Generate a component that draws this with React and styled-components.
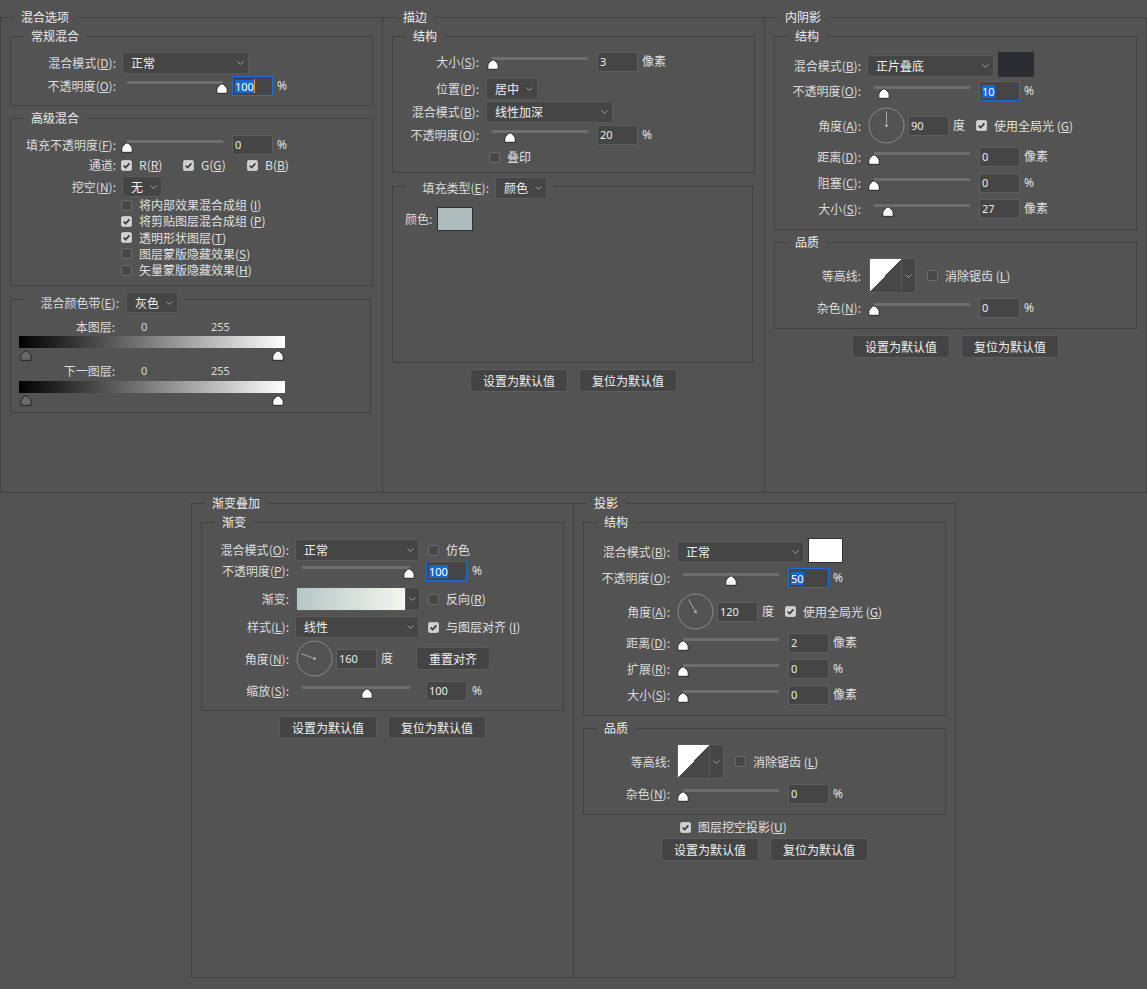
import React from 'react';
import styled, { createGlobalStyle } from 'styled-components';

const LINE = '#404040';
const FIELD = '#454545';
const EDGE = '#5e5e5e';

const GlobalStyle = createGlobalStyle`
  html, body {
    margin: 0;
    padding: 0;
    background: #535353;
  }
  body {
    font-family: "Noto Sans CJK SC", "Noto Sans", sans-serif;
    font-size: 12px;
    line-height: 16px;
    color: #e0e0e0;
  }
`;

const Page = styled.div`
  box-sizing: border-box;
  width: 1147px;
  height: 989px;
  padding-top: 9px;
  overflow: hidden;
`;

const TopRow = styled.div`
  display: flex;
`;

const BottomRow = styled.div`
  display: flex;
  margin-top: 2px;
  padding-left: 191px;
`;

const Panel = styled.fieldset`
  box-sizing: border-box;
  flex: none;
  width: 383px;
  height: ${({ $h }) => $h}px;
  min-width: 0;
  margin: 0;
  padding: 0;
  border: 1px solid ${LINE};
  & + & {
    margin-left: -1px;
  }
`;

const Title = styled.legend`
  height: 16px;
  margin-left: 13px;
  padding: 0 8px 0 7px;
  line-height: 16px;
  color: #ececec;
`;

const SelectLegend = styled.legend`
  height: 16px;
  margin-left: 13px;
  padding: 0;
`;

const LegendBar = styled.div`
  display: flex;
  align-items: center;
  height: ${({ $h }) => $h}px;
  margin-top: ${({ $mt }) => $mt}px;
  padding-right: 6px;
`;

const Group = styled.fieldset`
  box-sizing: border-box;
  width: ${({ $w }) => $w || 363}px;
  ${({ $h }) => ($h ? `height: ${$h}px;` : '')}
  min-width: 0;
  margin: ${({ $mt }) => $mt || 0}px 0 0 9px;
  padding: 0 0 ${({ $pb }) => $pb || 0}px;
  border: 1px solid ${LINE};
`;

const Row = styled.div`
  display: flex;
  align-items: center;
  height: ${({ $h }) => $h || 20}px;
  margin-top: ${({ $mt }) => $mt || 0}px;
  padding-left: ${({ $pl }) => $pl || 0}px;
`;

const Label = styled.span`
  flex: none;
  width: ${({ $w }) => $w}px;
  text-align: right;
  white-space: nowrap;
  color: #dcdcdc;
`;

const Key = styled.span`
  text-decoration: underline;
  text-underline-offset: 1px;
`;

const SelectBox = styled.div`
  flex: none;
  box-sizing: border-box;
  display: flex;
  align-items: center;
  justify-content: space-between;
  width: ${({ $w }) => $w}px;
  height: ${({ $h }) => $h || 22}px;
  margin-left: ${({ $ml }) => $ml || 0}px;
  padding: 0 4px 0 8px;
  background: ${FIELD};
  border: 1px solid #5a5a5a;
  border-radius: 3px;
  color: #f0f0f0;
  white-space: nowrap;
`;

const SliderBox = styled.div`
  flex: none;
  position: relative;
  align-self: stretch;
  width: ${({ $track }) => $track + 12}px;
  margin-left: ${({ $ml }) => $ml}px;
`;

const Track = styled.div`
  height: 3px;
  margin: 5px 6px 0;
  background: #6f6f6f;
`;

const ThumbSlot = styled.div`
  position: absolute;
  top: 7px;
  width: 12px;
  height: 11px;
  line-height: 0;
`;

const NumField = styled.div`
  flex: none;
  box-sizing: border-box;
  display: flex;
  align-items: center;
  width: ${({ $w }) => $w || 41}px;
  height: 20px;
  margin-left: ${({ $ml }) => $ml || 0}px;
  padding-left: 2px;
  background: ${FIELD};
  border: 1px solid ${({ $active }) => ($active ? '#1a6fd6' : EDGE)};
  font-family: "Noto Sans", sans-serif;
  font-size: 11px;
  color: #ececec;
`;

const Selected = styled.span`
  line-height: 13px;
  background: #1467d4;
  color: #ffffff;
`;

const Caret = styled.span`
  width: 1px;
  height: 14px;
  background: #f0962e;
`;

const Unit = styled.span`
  flex: none;
  margin-left: ${({ $ml }) => $ml || 0}px;
  font-family: "Noto Sans", "Noto Sans CJK SC", sans-serif;
  color: #e0e0e0;
`;

const CheckItem = styled.span`
  flex: none;
  display: flex;
  align-items: center;
  gap: 7px;
  width: ${({ $w }) => ($w ? `${$w}px` : 'auto')};
  margin-left: ${({ $ml }) => $ml || 0}px;
  white-space: nowrap;
  color: #e0e0e0;
`;

const Box = styled.span`
  flex: none;
  box-sizing: border-box;
  display: flex;
  align-items: center;
  justify-content: center;
  width: 11px;
  height: 11px;
  border-radius: 2px;
  border: 1px solid ${({ $on }) => ($on ? '#c4c4c4' : '#6c6c6c')};
  background: ${({ $on }) => ($on ? '#d0d0d0' : '#474747')};
`;

const CheckRow = styled.div`
  display: flex;
  align-items: center;
  height: 16.25px;
  padding-left: ${({ $pl }) => $pl}px;
`;

const Swatch = styled.div`
  flex: none;
  box-sizing: border-box;
  width: ${({ $w }) => $w}px;
  height: ${({ $h }) => $h}px;
  margin-left: ${({ $ml }) => $ml || 0}px;
  align-self: ${({ $end }) => ($end ? 'flex-end' : 'center')};
  background: ${({ $c }) => $c};
  border: 1px solid #303030;
`;

const DialBox = styled.div`
  flex: none;
  width: 37px;
  height: 37px;
  margin-left: ${({ $ml }) => $ml}px;
  line-height: 0;
`;

const Btn = styled.div`
  flex: none;
  box-sizing: border-box;
  display: flex;
  align-items: center;
  justify-content: center;
  width: ${({ $w }) => $w || 98}px;
  height: 23px;
  margin-left: ${({ $ml }) => $ml || 0}px;
  background: #444444;
  border: 1px solid #5c5c5c;
  border-radius: 3px;
  color: #f0f0f0;
  white-space: nowrap;
`;

const ButtonRow = styled.div`
  display: flex;
  justify-content: center;
  gap: 11px;
  margin-top: ${({ $mt }) => $mt}px;
`;

const GradientPick = styled.div`
  flex: none;
  box-sizing: border-box;
  display: flex;
  width: 124px;
  height: 24px;
  margin-left: ${({ $ml }) => $ml}px;
  background: ${FIELD};
  border: 1px solid #5a5a5a;
  border-radius: 2px;
`;

const GradientFill = styled.div`
  flex: 1;
  background: linear-gradient(to right, #b5c6c6, #f5f6ee);
`;

const DropStrip = styled.div`
  flex: none;
  display: flex;
  align-items: center;
  justify-content: center;
  width: 13px;
  border-left: 1px solid #5a5a5a;
`;

const ContourBox = styled.div`
  flex: none;
  box-sizing: border-box;
  display: flex;
  width: 47px;
  height: 35px;
  margin-left: ${({ $ml }) => $ml}px;
  background: ${FIELD};
  border: 1px solid #5c5c5c;
`;

const ContourCurve = styled.div`
  width: 34px;
  background: linear-gradient(to bottom right, #ffffff 50%, #474747 50%);
`;

const Band = styled.div`
  width: 266px;
  height: 12px;
  margin: ${({ $mt }) => $mt}px 0 0 8px;
  background: linear-gradient(to right, #000000, #ffffff);
`;

const BandThumbs = styled.div`
  box-sizing: border-box;
  display: flex;
  justify-content: space-between;
  width: 266px;
  height: 10px;
  margin: 2px 0 0 8px;
  padding: 0 1px;
  line-height: 0;
`;

const Num = styled.span`
  flex: none;
  width: ${({ $w }) => ($w ? `${$w}px` : 'auto')};
  margin-left: ${({ $ml }) => $ml || 0}px;
  font-family: "Noto Sans", sans-serif;
  font-size: 11px;
  color: #dcdcdc;
`;

const keyText = (t, k, sp) => (
  <>
    {t}
    {sp ? ' ' : ''}
    {k && <>(<Key>{k}</Key>)</>}
  </>
);

const Chevron = () => (
  <svg width="7" height="4" viewBox="0 0 7 4">
    <path d="M0.5 0.5 L3.5 3.5 L6.5 0.5" fill="none" stroke="#a3a3a3" />
  </svg>
);

const Select = ({ w, h, ml, children }) => (
  <SelectBox $w={w} $h={h} $ml={ml}>
    <span>{children}</span>
    <Chevron />
  </SelectBox>
);

const Thumb = ({ dark }) => (
  <svg width="12" height="11" viewBox="0 0 12 11">
    <path
      d="M6 0.8 C7.3 0.8 11.2 4.4 11.2 6.4 V10.3 H0.8 V6.4 C0.8 4.4 4.7 0.8 6 0.8 Z"
      fill={dark ? '#6a6a6a' : '#ffffff'}
      stroke="#242424"
    />
  </svg>
);

const Slider = ({ track, ml, pct }) => (
  <SliderBox $track={track} $ml={ml}>
    <Track />
    <ThumbSlot style={{ left: Math.round(6 + (pct / 100) * (track - 1) - 6) }}>
      <Thumb />
    </ThumbSlot>
  </SliderBox>
);

const Check = ({ on, t, k, sp, ml, w }) => (
  <CheckItem $ml={ml} $w={w}>
    <Box $on={on}>
      {on && (
        <svg width="9" height="9" viewBox="0 0 9 9">
          <path d="M1.6 4.6 L3.7 6.6 L7.4 2.4" fill="none" stroke="#383838" strokeWidth="1.6" />
        </svg>
      )}
    </Box>
    <span>{keyText(t, k, sp)}</span>
  </CheckItem>
);

const Dial = ({ angle, ml }) => {
  const a = (angle * Math.PI) / 180;
  const c = 18.5;
  return (
    <DialBox $ml={ml}>
      <svg width="37" height="37" viewBox="0 0 37 37">
        <circle cx={c} cy={c} r="17.5" fill="none" stroke="#8b8b8b" />
        <line
          x1={c + 2 * Math.cos(a)}
          y1={c - 2 * Math.sin(a)}
          x2={c + 14 * Math.cos(a)}
          y2={c - 14 * Math.sin(a)}
          stroke="#a8a8a8"
        />
        <circle cx={c} cy={c} r="1.6" fill="#a8a8a8" />
      </svg>
    </DialBox>
  );
};

const Contour = ({ ml }) => (
  <ContourBox $ml={ml}>
    <ContourCurve />
    <DropStrip>
      <Chevron />
    </DropStrip>
  </ContourBox>
);

const SliderRow = ({ c, mt, t, k, pct, value, unit = '%', active, caret }) => (
  <Row $mt={mt}>
    <Label $w={c.lw}>{keyText(t, k)}:</Label>
    <Slider track={c.track} ml={c.sml} pct={pct} />
    <NumField $ml={c.iml} $active={active}>
      {active ? <Selected>{value}</Selected> : value}
      {caret && <Caret />}
    </NumField>
    <Unit $ml={c.uml}>{unit}</Unit>
  </Row>
);

const Buttons = ({ mt }) => (
  <ButtonRow $mt={mt}>
    <Btn>设置为默认值</Btn>
    <Btn>复位为默认值</Btn>
  </ButtonRow>
);

const P1 = { lw: 105, sml: 5, track: 96, iml: 3, uml: 4 };
const P2 = { lw: 86, sml: 7, track: 96, iml: 3, uml: 4 };
const P4 = { lw: 87, sml: 7, track: 108, iml: 10, uml: 5 };

const BlendOptions = () => (
  <Panel $h={484}>
    <Title>混合选项</Title>
    <Group $mt={3} $pb={9}>
      <Title>常规混合</Title>
      <Row $h={22} $mt={8}>
        <Label $w={105}>{keyText('混合模式', 'D')}:</Label>
        <Select w={127} ml={6}>正常</Select>
      </Row>
      <SliderRow c={P1} mt={2} t="不透明度" k="O" pct={100} value="100" active caret />
    </Group>
    <Group $mt={4} $pb={7}>
      <Title>高级混合</Title>
      <SliderRow c={P1} mt={9} t="填充不透明度" k="F" pct={0} value="0" />
      <Row>
        <Label $w={105}>通道:</Label>
        <Check on ml={5} w={62} t="R" k="R" />
        <Check on w={64} t="G" k="G" />
        <Check on t="B" k="B" />
      </Row>
      <Row $h={21} $mt={1}>
        <Label $w={105}>{keyText('挖空', 'N')}:</Label>
        <Select w={40} h={21} ml={6}>无</Select>
      </Row>
      <CheckRow $pl={110}><Check t="将内部效果混合成组" k="I" sp /></CheckRow>
      <CheckRow $pl={110}><Check on t="将剪贴图层混合成组" k="P" sp /></CheckRow>
      <CheckRow $pl={110}><Check on t="透明形状图层" k="T" /></CheckRow>
      <CheckRow $pl={110}><Check t="图层蒙版隐藏效果" k="S" /></CheckRow>
      <CheckRow $pl={110}><Check t="矢量蒙版隐藏效果" k="H" /></CheckRow>
    </Group>
    <Group $w={361} $mt={5} $pb={7}>
      <SelectLegend>
        <LegendBar $h={21} $mt={1}>
          <Label $w={95}>{keyText('混合颜色带', 'E')}:</Label>
          <Select w={52} h={21} ml={7}>灰色</Select>
        </LegendBar>
      </SelectLegend>
      <Row $h={16} $mt={12}>
        <Label $w={104}>本图层:</Label>
        <Num $ml={26} $w={70}>0</Num>
        <Num>255</Num>
      </Row>
      <Band $mt={1} />
      <BandThumbs>
        <Thumb dark />
        <Thumb />
      </BandThumbs>
      <Row $h={16} $mt={3}>
        <Label $w={104}>下一图层:</Label>
        <Num $ml={26} $w={70}>0</Num>
        <Num>255</Num>
      </Row>
      <Band $mt={2} />
      <BandThumbs>
        <Thumb dark />
        <Thumb />
      </BandThumbs>
    </Group>
  </Panel>
);

const Stroke = () => (
  <Panel $h={484}>
    <Title>描边</Title>
    <Group $mt={3} $pb={7}>
      <Title>结构</Title>
      <SliderRow c={P2} mt={8} t="大小" k="S" pct={1} value="3" unit="像素" />
      <Row $h={22} $mt={6}>
        <Label $w={86}>{keyText('位置', 'P')}:</Label>
        <Select w={52} ml={7}>居中</Select>
      </Row>
      <Row $h={22} $mt={1}>
        <Label $w={86}>{keyText('混合模式', 'B')}:</Label>
        <Select w={127} ml={7}>线性加深</Select>
      </Row>
      <SliderRow c={P2} mt={2} t="不透明度" k="O" pct={19} value="20" />
      <Row $h={16} $mt={4} $pl={96}>
        <Check t="叠印" />
      </Row>
    </Group>
    <Group $w={361} $h={185} $mt={5}>
      <SelectLegend>
        <LegendBar $h={22} $mt={-1}>
          <Label $w={83}>{keyText('填充类型', 'E')}:</Label>
          <Select w={52} ml={6}>颜色</Select>
        </LegendBar>
      </SelectLegend>
      <Row $h={24} $mt={13} $pl={12}>
        <Label>颜色:</Label>
        <Swatch $w={36} $h={24} $ml={5} $c="#adbcbc" />
      </Row>
    </Group>
    <Buttons mt={6} />
  </Panel>
);

const InnerShadow = () => (
  <Panel $h={484}>
    <Title>内阴影</Title>
    <Group $mt={3} $pb={10}>
      <Title>结构</Title>
      <Row $h={22} $mt={11}>
        <Label $w={86}>{keyText('混合模式', 'B')}:</Label>
        <Select w={127} ml={6}>正片叠底</Select>
        <Swatch $w={36} $h={25} $ml={4} $c="#2a2b33" $end />
      </Row>
      <SliderRow c={P2} mt={4} t="不透明度" k="O" pct={10} value="10" active />
      <Row $h={37} $mt={6}>
        <Label $w={86}>{keyText('角度', 'A')}:</Label>
        <Dial angle={90} ml={7} />
        <NumField $ml={3}>90</NumField>
        <Unit $ml={4}>度</Unit>
        <Check on ml={11} t="使用全局光" k="G" sp />
      </Row>
      <SliderRow c={P2} mt={3} t="距离" k="D" pct={0} value="0" unit="像素" />
      <SliderRow c={P2} mt={6} t="阻塞" k="C" pct={0} value="0" />
      <SliderRow c={P2} mt={6} t="大小" k="S" pct={15} value="27" unit="像素" />
    </Group>
    <Group $mt={4} $pb={10}>
      <Title>品质</Title>
      <Row $h={35} $mt={8}>
        <Label $w={86}>等高线:</Label>
        <Contour ml={8} />
        <Check ml={11} t="消除锯齿" k="L" sp />
      </Row>
      <SliderRow c={P2} mt={5} t="杂色" k="N" pct={0} value="0" />
    </Group>
    <Buttons mt={6} />
  </Panel>
);

const GradientOverlay = () => (
  <Panel $h={483}>
    <Title>渐变叠加</Title>
    <Group $mt={3} $pb={9}>
      <Title>渐变</Title>
      <Row $h={22} $mt={9}>
        <Label $w={87}>{keyText('混合模式', 'O')}:</Label>
        <Select w={124} ml={6}>正常</Select>
        <Check ml={9} t="仿色" />
      </Row>
      <SliderRow c={P4} t="不透明度" k="P" pct={100} value="100" active />
      <Row $h={24} $mt={6}>
        <Label $w={87}>渐变:</Label>
        <GradientPick $ml={7}>
          <GradientFill />
          <DropStrip>
            <Chevron />
          </DropStrip>
        </GradientPick>
        <Check ml={8} t="反向" k="R" />
      </Row>
      <Row $h={22} $mt={5}>
        <Label $w={87}>{keyText('样式', 'L')}:</Label>
        <Select w={124} ml={6}>线性</Select>
        <Check on ml={9} t="与图层对齐" k="I" sp />
      </Row>
      <Row $h={37} $mt={2}>
        <Label $w={87}>{keyText('角度', 'N')}:</Label>
        <Dial angle={160} ml={7} />
        <NumField $ml={3}>160</NumField>
        <Unit $ml={4}>度</Unit>
        <Btn $w={74} $ml={23}>重置对齐</Btn>
      </Row>
      <SliderRow c={P4} mt={4} t="缩放" k="S" pct={61} value="100" />
    </Group>
    <Buttons mt={5} />
  </Panel>
);

const DropShadow = () => (
  <Panel $h={483}>
    <Title>投影</Title>
    <Group $mt={3} $pb={10}>
      <Title>结构</Title>
      <Row $h={22} $mt={11}>
        <Label $w={86}>{keyText('混合模式', 'B')}:</Label>
        <Select w={127} ml={7}>正常</Select>
        <Swatch $w={35} $h={25} $ml={4} $c="#ffffff" $end />
      </Row>
      <SliderRow c={P2} mt={5} t="不透明度" k="O" pct={50} value="50" active />
      <Row $h={37} $mt={5}>
        <Label $w={86}>{keyText('角度', 'A')}:</Label>
        <Dial angle={120} ml={7} />
        <NumField $ml={3}>120</NumField>
        <Unit $ml={4}>度</Unit>
        <Check on ml={11} t="使用全局光" k="G" sp />
      </Row>
      <SliderRow c={P2} mt={3} t="距离" k="D" pct={0} value="2" unit="像素" />
      <SliderRow c={P2} mt={6} t="扩展" k="R" pct={0} value="0" />
      <SliderRow c={P2} mt={6} t="大小" k="S" pct={0} value="0" unit="像素" />
    </Group>
    <Group $mt={4} $pb={10}>
      <Title>品质</Title>
      <Row $h={35} $mt={8}>
        <Label $w={86}>等高线:</Label>
        <Contour ml={7} />
        <Check ml={11} t="消除锯齿" k="L" sp />
      </Row>
      <SliderRow c={P2} mt={5} t="杂色" k="N" pct={0} value="0" />
    </Group>
    <Row $h={16} $mt={4} $pl={106}>
      <Check on t="图层挖空投影" k="U" />
    </Row>
    <Buttons mt={3} />
  </Panel>
);

export default function App() {
  return (
    <Page>
      <GlobalStyle />
      <TopRow>
        <BlendOptions />
        <Stroke />
        <InnerShadow />
      </TopRow>
      <BottomRow>
        <GradientOverlay />
        <DropShadow />
      </BottomRow>
    </Page>
  );
}
